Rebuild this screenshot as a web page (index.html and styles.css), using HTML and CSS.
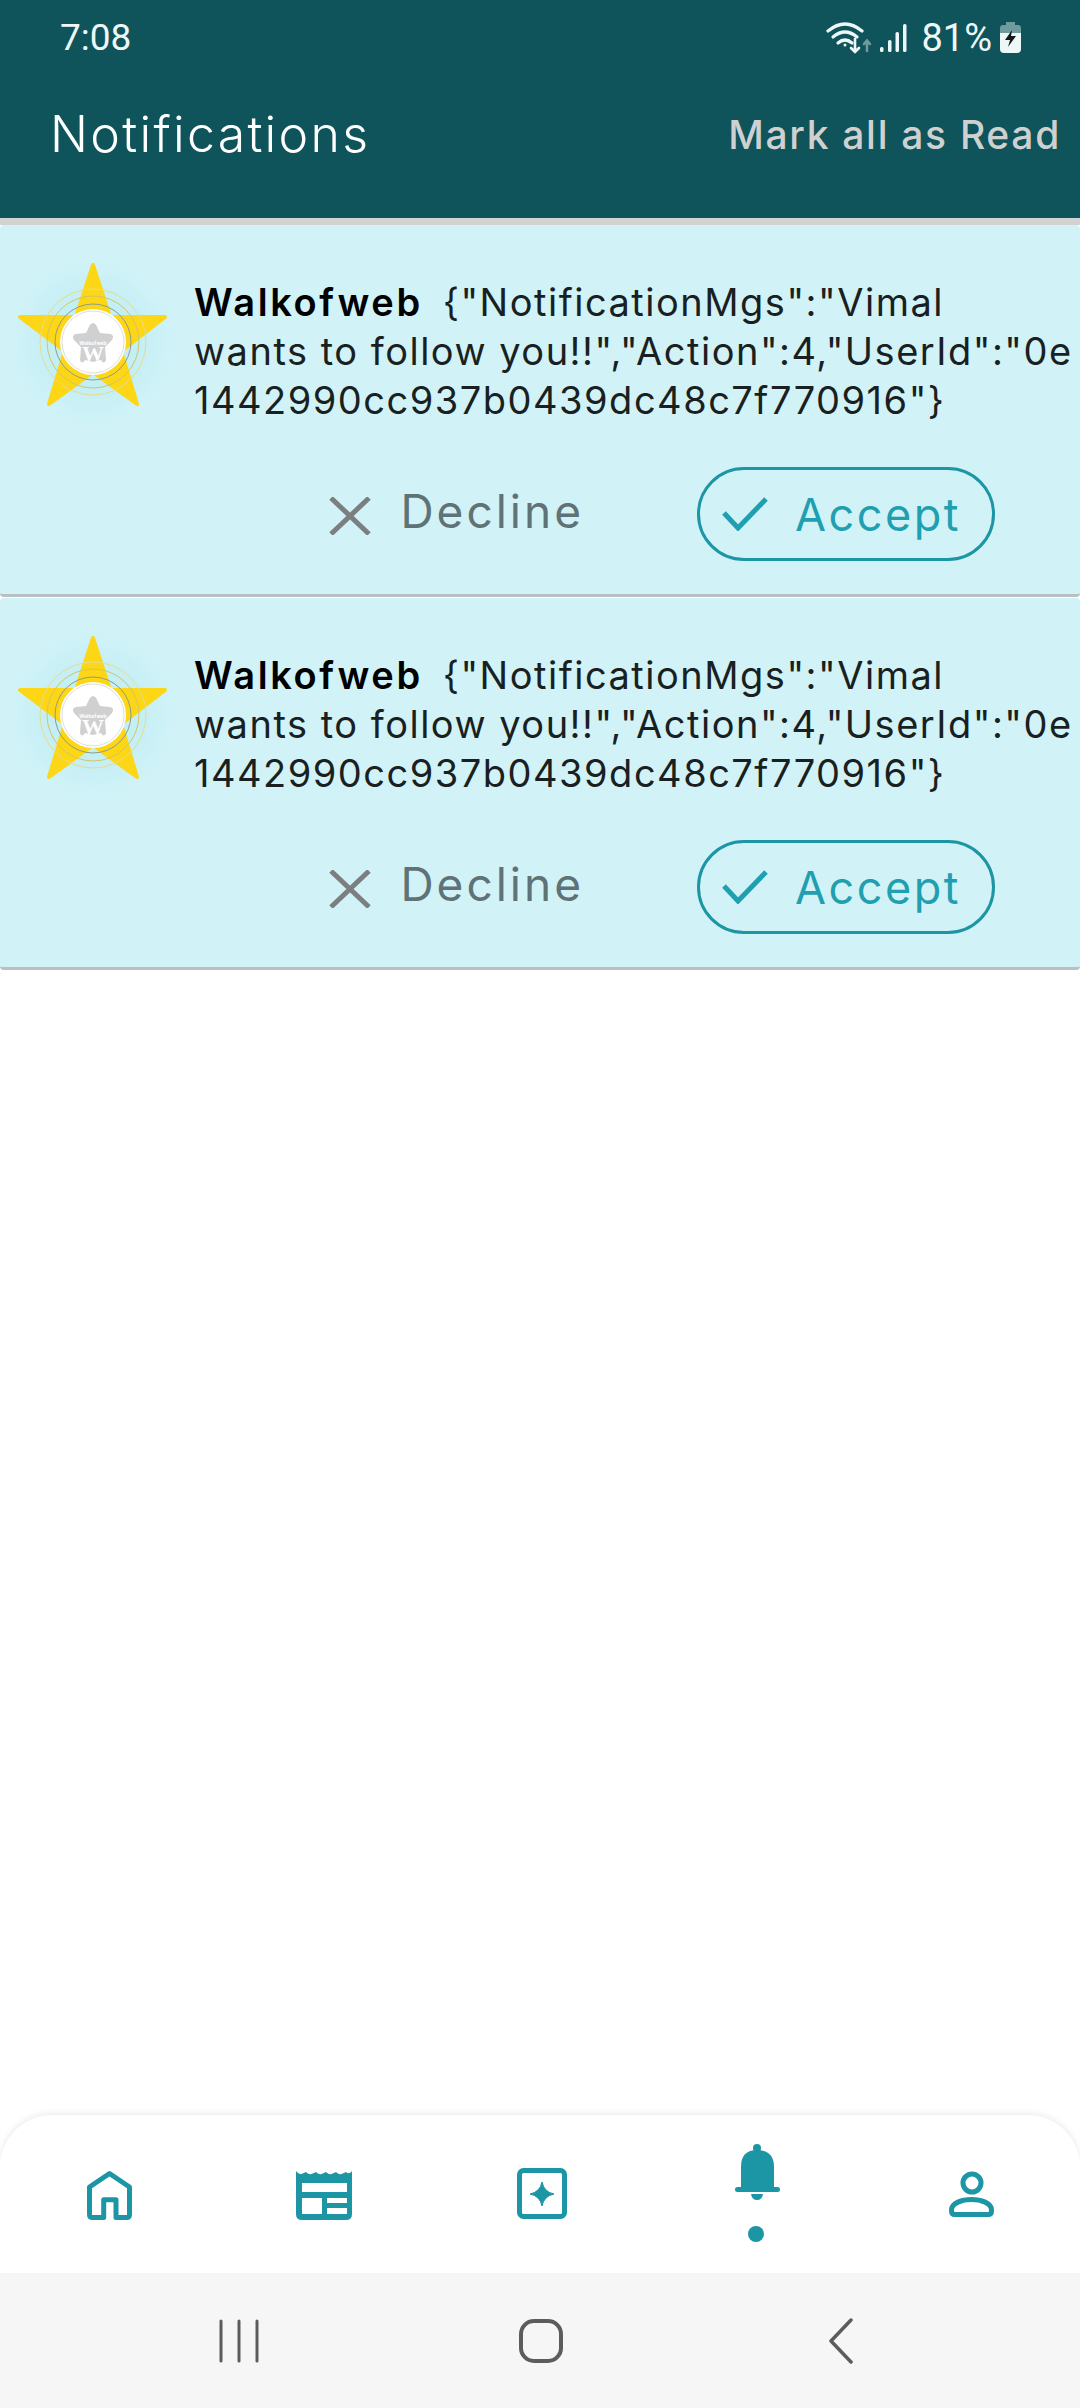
FILE: index.html
```html
<!DOCTYPE html>
<html lang="en">
<head>
    <meta charset="UTF-8">
    <meta name="viewport" content="width=device-width, initial-scale=1.0">
    <title>Notifications</title>
    <link rel="stylesheet" href="styles.css">
</head>
<body>
    <svg class="defs" width="0" height="0">
        <defs>
            <radialGradient id="glow">
                <stop offset="50%" stop-color="#a9e6ee" stop-opacity="0.35"/>
                <stop offset="100%" stop-color="#a9e6ee" stop-opacity="0"/>
            </radialGradient>
            <symbol id="avatar" viewBox="0 0 180 180">
                <circle cx="93" cy="92" r="85" fill="url(#glow)"/>
                <polygon points="93,15 110,67 165,67 121,101 137,154 93,122 49,154 65,101 20,67 76,67" fill="#fdd615" stroke="#fdd615" stroke-width="4" stroke-linejoin="round"/>
                <circle cx="93" cy="92" r="53" fill="none" stroke="#e6dc8c" stroke-width="1"/>
                <circle cx="93" cy="92" r="46" fill="none" stroke="#d2c662" stroke-width="1"/>
                <circle cx="93" cy="92" r="38" fill="none" stroke="#8e9c88" stroke-width="1"/>
                <circle cx="93" cy="92" r="33" fill="#fff"/>
                <circle cx="93" cy="92" r="31" fill="none" stroke="#dedede" stroke-width="1"/>
                <path d="M93 73 Q96 73 98 79 L100 83 L110 84 Q115 85 112 90 L105 97 L106 110 Q104 115 101 110 L93 112 L85 110 Q82 115 80 110 L81 97 L74 90 Q71 85 76 84 L86 83 L88 79 Q90 73 93 73 Z" fill="#d0d0d0"/>
                <text x="93" y="111" class="logo-w">W</text>
                <text x="93" y="95" class="logo-name">Walkofweb</text>
            </symbol>
        </defs>
    </svg>

    <div class="screen">
        <header class="topbar">
            <div class="status">
                <span class="clock">7:08</span>
                <div class="status-right">
                    <svg class="wifi" width="46" height="36" viewBox="0 0 46 36" fill="none" stroke="#eef7f8" stroke-width="3.2" stroke-linecap="round">
                        <path d="M2 11 Q19 -3 36 11"/>
                        <path d="M7 17 Q19 7 31 17"/>
                        <path d="M12 23 Q19 17 26 23"/>
                        <circle cx="19" cy="25" r="1.500" fill="#eef7f8" stroke="none"/>
                        <path d="M29 19 V31 M25 28 L29 32 L33 28" stroke-width="2.6"/>
                        <path d="M41 31 V21 M38 24 L41 20.500 L44 24" stroke="#6f9a9e" stroke-width="2.6"/>
                    </svg>
                    <svg class="signal" width="28" height="30" viewBox="0 0 28 30" fill="#eef7f8">
                        <rect x="1" y="24" width="3.500" height="5" rx="1.500"/>
                        <rect x="9" y="17" width="3.500" height="12" rx="1.500"/>
                        <rect x="16.500" y="9" width="3.500" height="20" rx="1.500"/>
                        <rect x="24" y="1" width="3.500" height="28" rx="1.500"/>
                    </svg>
                    <span class="percent">81%</span>
                    <svg class="battery" width="21" height="31" viewBox="0 0 21 31">
                        <path d="M6 0 H15 V3 H18 Q21 3 21 6 V11 H0 V6 Q0 3 3 3 H6 Z" fill="#6f9a9e"/>
                        <path d="M0 11 H21 V27 Q21 31 17 31 H4 Q0 31 0 27 Z" fill="#eef7f8"/>
                        <path d="M12 8 L5 18 H10 L8 25 L16 14 H11 Z" fill="#15191a"/>
                    </svg>
                </div>
            </div>
            <div class="title-row">
                <h1>Notifications</h1>
                <span class="mark-read">Mark all as Read</span>
            </div>
        </header>

        <main class="list">
            <div class="card">
                <svg class="avatar" width="180" height="180"><use href="#avatar"/></svg>
                <div class="card-body">
                    <p class="message"><strong>Walkofweb</strong>{"NotificationMgs":"Vimal<br>wants to follow you!!","Action":4,"UserId":"0e<br>1442990cc937b0439dc48c7f770916"}</p>
                    <div class="actions">
                        <span class="decline">
                            <svg width="42" height="38" viewBox="0 0 42 38" fill="none" stroke="#7c7f80" stroke-width="5"><path d="M2 1 L40 37 M40 1 L2 37"/></svg>
                            <span class="decline-label">Decline</span>
                        </span>
                        <span class="accept">
                            <svg width="46" height="34" viewBox="0 0 46 34" fill="none" stroke="#1f9fb0" stroke-width="5"><path d="M2 16 L16 31 L44 2"/></svg>
                            Accept
                        </span>
                    </div>
                </div>
            </div>
            <div class="card">
                <svg class="avatar" width="180" height="180"><use href="#avatar"/></svg>
                <div class="card-body">
                    <p class="message"><strong>Walkofweb</strong>{"NotificationMgs":"Vimal<br>wants to follow you!!","Action":4,"UserId":"0e<br>1442990cc937b0439dc48c7f770916"}</p>
                    <div class="actions">
                        <span class="decline">
                            <svg width="42" height="38" viewBox="0 0 42 38" fill="none" stroke="#7c7f80" stroke-width="5"><path d="M2 1 L40 37 M40 1 L2 37"/></svg>
                            <span class="decline-label">Decline</span>
                        </span>
                        <span class="accept">
                            <svg width="46" height="34" viewBox="0 0 46 34" fill="none" stroke="#1f9fb0" stroke-width="5"><path d="M2 16 L16 31 L44 2"/></svg>
                            Accept
                        </span>
                    </div>
                </div>
            </div>
        </main>

        <nav class="tabs">
            <div class="tab">
                <svg width="60" height="60" viewBox="0 0 60 60" fill="none" stroke="#1c95a4" stroke-width="5" stroke-linejoin="round">
                    <path d="M11.500 23 L31.500 9.500 L51.500 23 V50.500 Q51.500 53.500 48.500 53.500 H38 V35.700 H25.700 V53.500 H14.500 Q11.500 53.500 11.500 50.500 Z"/>
                </svg>
            </div>
            <div class="tab">
                <svg width="60" height="60" viewBox="0 0 60 60">
                    <path d="M2 7 Q5 11 7.500 10 T12 8 Q15 11 17.500 10 T22 8 Q25 11 27.500 10 T32 8 Q35 11 37.500 10 T42 8 Q45 11 47.500 10 T52 8 Q55 11 58 7 V50 Q58 56 52 56 H8 Q2 56 2 50 Z" fill="#1c95a4"/>
                    <path d="M8 19 H53 V28 H8 Z M8 34 H28 V50 H8 Z M33 34 H53 V39 H33 Z M33 44 H53 V50 H33 Z" fill="#fff"/>
                </svg>
            </div>
            <div class="tab">
                <svg width="60" height="60" viewBox="0 0 60 60">
                    <rect x="9.500" y="6.500" width="45" height="46" rx="4" fill="none" stroke="#1c95a4" stroke-width="5"/>
                    <path d="M32 18 Q34 28 44 30 Q34 32 32 42 Q30 32 20 30 Q30 28 32 18 Z" fill="#1c95a4" stroke="#1c95a4" stroke-width="1" stroke-linejoin="round"/>
                </svg>
            </div>
            <div class="tab tab-active">
                <svg width="60" height="60" viewBox="0 0 60 60" fill="#1c95a4">
                    <circle cx="31" cy="8" r="4"/>
                    <path d="M15 47 V27 Q15 10 31 10 Q48 10 48 27 V47 Z"/>
                    <rect x="9" y="47" width="45" height="5" rx="2.500"/>
                    <path d="M25 54 H37 Q36 60 31 60 Q26 60 25 54 Z"/>
                </svg>
                <span class="tab-dot"></span>
            </div>
            <div class="tab">
                <svg width="60" height="60" viewBox="0 0 60 60" fill="none" stroke="#1c95a4" stroke-width="5">
                    <circle cx="30" cy="19" r="9"/>
                    <path d="M9.500 46 C9.500 39 20 35.500 29.500 35.500 C39 35.500 49.500 39 49.500 46 V47 Q49.500 50.500 46 50.500 H13 Q9.500 50.500 9.500 47 Z"/>
                </svg>
            </div>
        </nav>

        <div class="system-nav">
            <svg width="42" height="44" viewBox="0 0 42 44" fill="none" stroke="#5c5c5c" stroke-width="3" stroke-linecap="round">
                <path d="M3 2 V42 M21 2 V42 M39 2 V42"/>
            </svg>
            <svg width="46" height="46" viewBox="0 0 46 46" fill="none" stroke="#5c5c5c" stroke-width="4">
                <rect x="3" y="3" width="40" height="40" rx="13"/>
            </svg>
            <svg class="back" width="26" height="46" viewBox="0 0 26 46" fill="none" stroke="#5c5c5c" stroke-width="3.500" stroke-linecap="round" stroke-linejoin="round">
                <path d="M23 2 L3 23 L23 44"/>
            </svg>
        </div>
    </div>
</body>
</html>
```

FILE: styles.css
```css
html, body {
    margin: 0;
    padding: 0;
}

body {
    font-family: Inter, "Open Sans", sans-serif;
    background-color: #fff;
}

.defs {
    display: block;
    height: 0;
}

.screen {
    width: 1080px;
    height: 2408px;
    display: flex;
    flex-direction: column;
    overflow: hidden;
}

/* top bar */
.topbar {
    height: 218px;
    background-color: #0f535b;
    flex-shrink: 0;
}

.status {
    height: 75px;
    padding: 0 59px 0 60px;
    display: flex;
    justify-content: space-between;
    align-items: center;
    font-family: Roboto, sans-serif;
    color: #eef7f8;
}

.clock {
    font-size: 37px;
}

.status-right {
    display: flex;
    align-items: center;
}

.wifi {
    margin-right: 7px;
}

.signal {
    margin-right: 14px;
}

.percent {
    font-size: 38px;
    margin-right: 8px;
}

.title-row {
    height: 118px;
    padding: 0 19px 0 50px;
    display: flex;
    justify-content: space-between;
    align-items: center;
}

h1 {
    margin: 0;
    font-size: 50px;
    font-weight: 300;
    letter-spacing: 2.3px;
    color: #fff;
}

.mark-read {
    font-size: 39px;
    font-weight: 500;
    letter-spacing: 1.7px;
    color: #cfd1d1;
}

/* notification cards */
.list {
    flex: 1;
    border-top: 7px solid #d2d2d2;
}

.card {
    height: 372px;
    margin-bottom: 1px;
    box-sizing: border-box;
    display: flex;
    background-color: #d1f3f8;
    border-bottom: 3px solid #b8c0c2;
    border-radius: 4px;
}

.avatar {
    margin-top: 25px;
    flex-shrink: 0;
}

.logo-w {
    font-family: "Liberation Serif", serif;
    font-size: 22px;
    font-weight: bold;
    text-anchor: middle;
    fill: #fff;
}

.logo-name {
    font-family: Inter, sans-serif;
    font-size: 5px;
    font-weight: bold;
    text-anchor: middle;
    fill: #fff;
}

.card-body {
    margin-left: 14px;
    flex: 1;
}

.message {
    margin: 53px 0 0;
    font-size: 38px;
    line-height: 49px;
    letter-spacing: 1.5px;
    white-space: nowrap;
    color: #1a1f21;
}

.message strong {
    font-weight: 600;
    letter-spacing: 2.6px;
    color: #000;
    margin-right: 20px;
}

.actions {
    margin-top: 42px;
    padding-right: 85px;
    display: flex;
    justify-content: flex-end;
    align-items: center;
}

.decline {
    display: flex;
    align-items: center;
    gap: 29px;
    margin-right: 113px;
    font-size: 46px;
    letter-spacing: 3px;
    color: #5f7276;
}

.decline svg {
    margin-top: 4px;
}

.decline-label {
    margin-bottom: 6px;
}

.accept {
    width: 298px;
    height: 94px;
    box-sizing: border-box;
    padding-left: 22px;
    display: flex;
    align-items: center;
    gap: 27px;
    border: 3px solid #1c95a4;
    border-radius: 47px;
    font-size: 45px;
    letter-spacing: 2.5px;
    color: #1f9fb0;
}

/* bottom tabs */
.tabs {
    height: 158px;
    flex-shrink: 0;
    display: grid;
    grid-template-columns: repeat(5, 1fr);
    align-items: center;
    justify-items: center;
    background-color: #fff;
    border-radius: 52px 52px 0 0;
    box-shadow: 0 -2px 6px rgba(0,0,0,0.08);
}

.tab {
    display: flex;
    flex-direction: column;
    align-items: center;
}

.tab svg {
    display: block;
}

.tab-active {
    padding-bottom: 6px;
}

.tab-dot {
    width: 16px;
    height: 16px;
    margin-top: 26px;
    border-radius: 50%;
    background-color: #1c95a4;
}

/* android nav bar */
.system-nav {
    height: 135px;
    flex-shrink: 0;
    display: flex;
    align-items: center;
    background-color: #f6f6f6;
    padding-left: 218px;
    gap: 258px;
}

.back {
    margin-left: 6px;
}
```
